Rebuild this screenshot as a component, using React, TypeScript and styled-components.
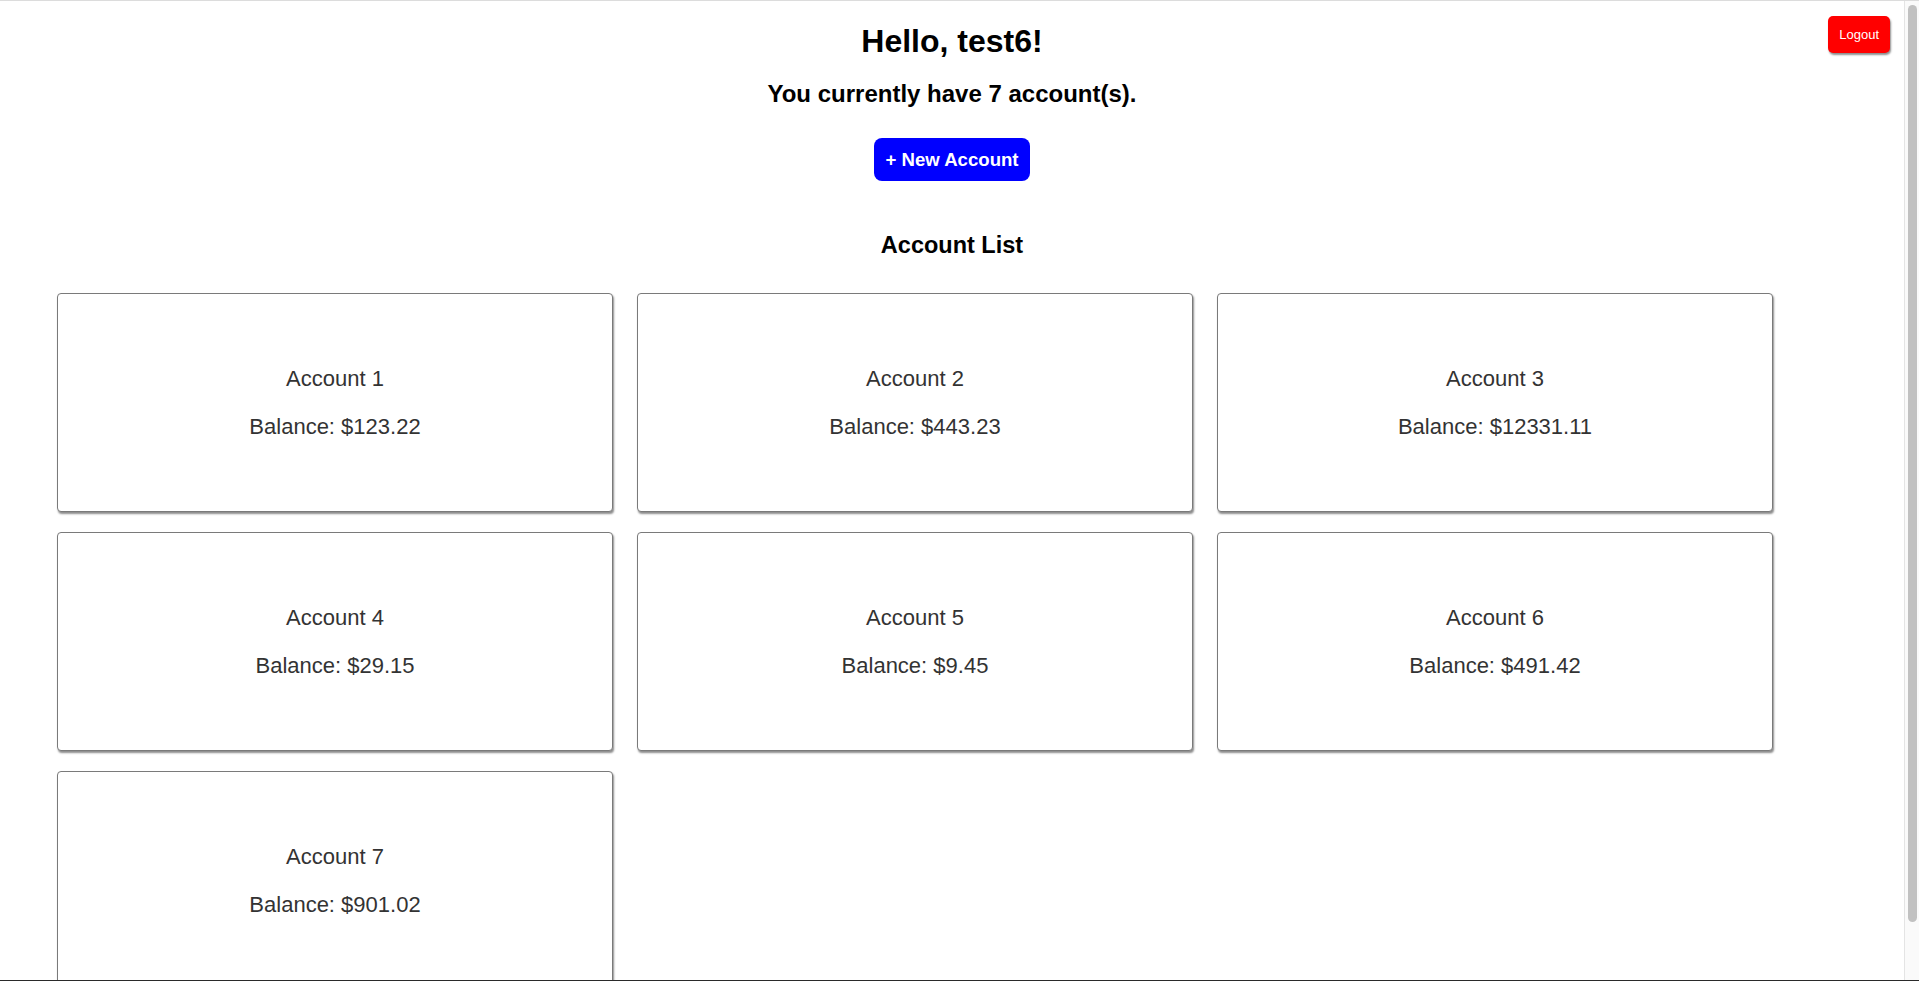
import React from "react";
import styled, { createGlobalStyle } from "styled-components";

const GlobalStyle = createGlobalStyle`
  html, body {
    margin: 0;
    padding: 0;
    background: #ffffff;
    overflow: hidden;
  }
  body {
    font-family: "Liberation Sans", Arial, Helvetica, sans-serif;
    color: #000;
  }
  * { box-sizing: border-box; }
`;

const Viewport = styled.div`
  display: flex;
  flex-direction: row;
  height: 100vh;
  border-top: 1px solid #dcdcdc;
  border-bottom: 1px solid #2a2a2a;
  overflow: hidden;
`;

const Page = styled.main`
  flex: 1;
  min-width: 0;
  display: flex;
  flex-direction: column;
  align-items: stretch;
  overflow: hidden;
`;

const ScrollTrack = styled.aside`
  flex: 0 0 15px;
  display: flex;
  flex-direction: column;
  padding: 4px 2px 0 3px;
  background: #fafafa;
  border-left: 1px solid #e4e4e4;
`;

const ScrollThumb = styled.div`
  height: 94%;
  border-radius: 5px;
  background: #c1c1c1;
`;

const Header = styled.header`
  display: grid;
  grid-template-columns: 1fr auto 1fr;
  align-items: start;
`;

const Greeting = styled.h1`
  grid-column: 2;
  margin: 22px 0 0;
  font-size: 32px;
  line-height: 37px;
  font-weight: 700;
  text-align: center;
`;

const LogoutButton = styled.button`
  grid-column: 3;
  justify-self: end;
  margin: 15px 14px 0 0;
  height: 37px;
  padding: 0 11px;
  border: none;
  border-radius: 5px;
  background: #ff0000;
  color: #ffffff;
  font-family: "Liberation Sans", Arial, sans-serif;
  font-size: 13px;
  box-shadow: 1px 2px 2px rgba(0, 0, 0, 0.45);
  cursor: pointer;
`;

const Summary = styled.h2`
  margin: 20px 0 0;
  font-size: 24px;
  line-height: 28px;
  font-weight: 700;
  text-align: center;
`;

const ActionRow = styled.div`
  display: flex;
  justify-content: center;
  margin-top: 30px;
`;

const NewAccountButton = styled.button`
  height: 43px;
  padding: 0 11px;
  border: none;
  border-radius: 8px;
  background: #0000ff;
  color: #ffffff;
  font-family: "Liberation Sans", Arial, sans-serif;
  font-weight: 700;
  font-size: 18.6px;
  cursor: pointer;
`;

const SectionTitle = styled.h3`
  margin: 51px 0 0;
  font-size: 23.5px;
  line-height: 27px;
  font-weight: 700;
  text-align: center;
`;

const CardGrid = styled.div`
  display: grid;
  grid-template-columns: repeat(3, 556px);
  column-gap: 24px;
  row-gap: 20px;
  margin: 34px 0 0 57px;
`;

const Card = styled.div`
  height: 219px;
  border: 1px solid #7a7a7a;
  border-radius: 4px;
  box-shadow: 1px 2px 2px rgba(0, 0, 0, 0.45);
  display: flex;
  flex-direction: column;
  align-items: center;
  justify-content: center;
  gap: 22.5px;
  color: #333333;
  background: #ffffff;
`;

const CardLine = styled.p`
  margin: 0;
  font-size: 22px;
  line-height: 25px;
`;

const accounts = [
  { name: "Account 1", balance: "$123.22" },
  { name: "Account 2", balance: "$443.23" },
  { name: "Account 3", balance: "$12331.11" },
  { name: "Account 4", balance: "$29.15" },
  { name: "Account 5", balance: "$9.45" },
  { name: "Account 6", balance: "$491.42" },
  { name: "Account 7", balance: "$901.02" },
];

export default function App() {
  return (
    <>
      <GlobalStyle />
      <Viewport>
        <Page>
          <Header>
            <Greeting>Hello, test6!</Greeting>
            <LogoutButton>Logout</LogoutButton>
          </Header>
          <Summary>You currently have {accounts.length} account(s).</Summary>
          <ActionRow>
            <NewAccountButton>+ New Account</NewAccountButton>
          </ActionRow>
          <SectionTitle>Account List</SectionTitle>
          <CardGrid>
            {accounts.map((a) => (
              <Card key={a.name}>
                <CardLine>{a.name}</CardLine>
                <CardLine>Balance: {a.balance}</CardLine>
              </Card>
            ))}
          </CardGrid>
        </Page>
        <ScrollTrack>
          <ScrollThumb />
        </ScrollTrack>
      </Viewport>
    </>
  );
}
